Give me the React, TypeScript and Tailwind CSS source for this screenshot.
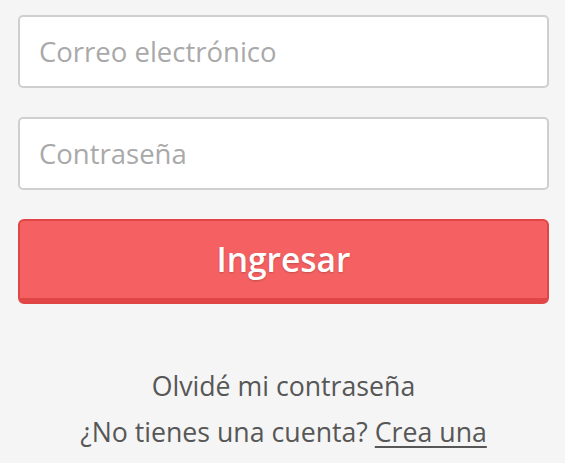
export default function App() {
  return (
    <div
      className="min-h-[463px] w-full bg-[#f5f5f5] pl-[18px] pr-[16px] pt-[15px]"
      style={{ fontFamily: '"Open Sans", sans-serif' }}
    >
      <form className="flex flex-col gap-[29px]" onSubmit={(e) => e.preventDefault()}>
        <input
          type="email"
          placeholder="Correo electrónico"
          className="h-[73px] w-full rounded-[5px] border-2 border-[#cfcfcf] bg-white px-[19px] text-[27.5px] text-[#555] placeholder:text-[#a9a9a9] outline-none"
        />
        <input
          type="password"
          placeholder="Contraseña"
          className="h-[73px] w-full rounded-[5px] border-2 border-[#cfcfcf] bg-white px-[19px] text-[27.5px] text-[#555] placeholder:text-[#a9a9a9] outline-none"
        />
        <button
          type="submit"
          className="h-[85px] w-full rounded-[6px] border-2 border-b-[6px] border-[#e14646] bg-[#f56062] text-[33.5px] font-semibold text-white [text-shadow:0_1px_2px_rgba(0,0,0,0.2)]"
        >
          Ingresar
        </button>
      </form>
      <div className="mt-[65px] flex flex-col items-center gap-[13px] text-[26.7px] text-[#575757]">
        <a href="#" className="leading-[33px]">Olvidé mi contraseña</a>
        <p className="leading-[33px]">
          ¿No tienes una cuenta? <a href="#" className="underline underline-offset-4">Crea una</a>
        </p>
      </div>
    </div>
  );
}
